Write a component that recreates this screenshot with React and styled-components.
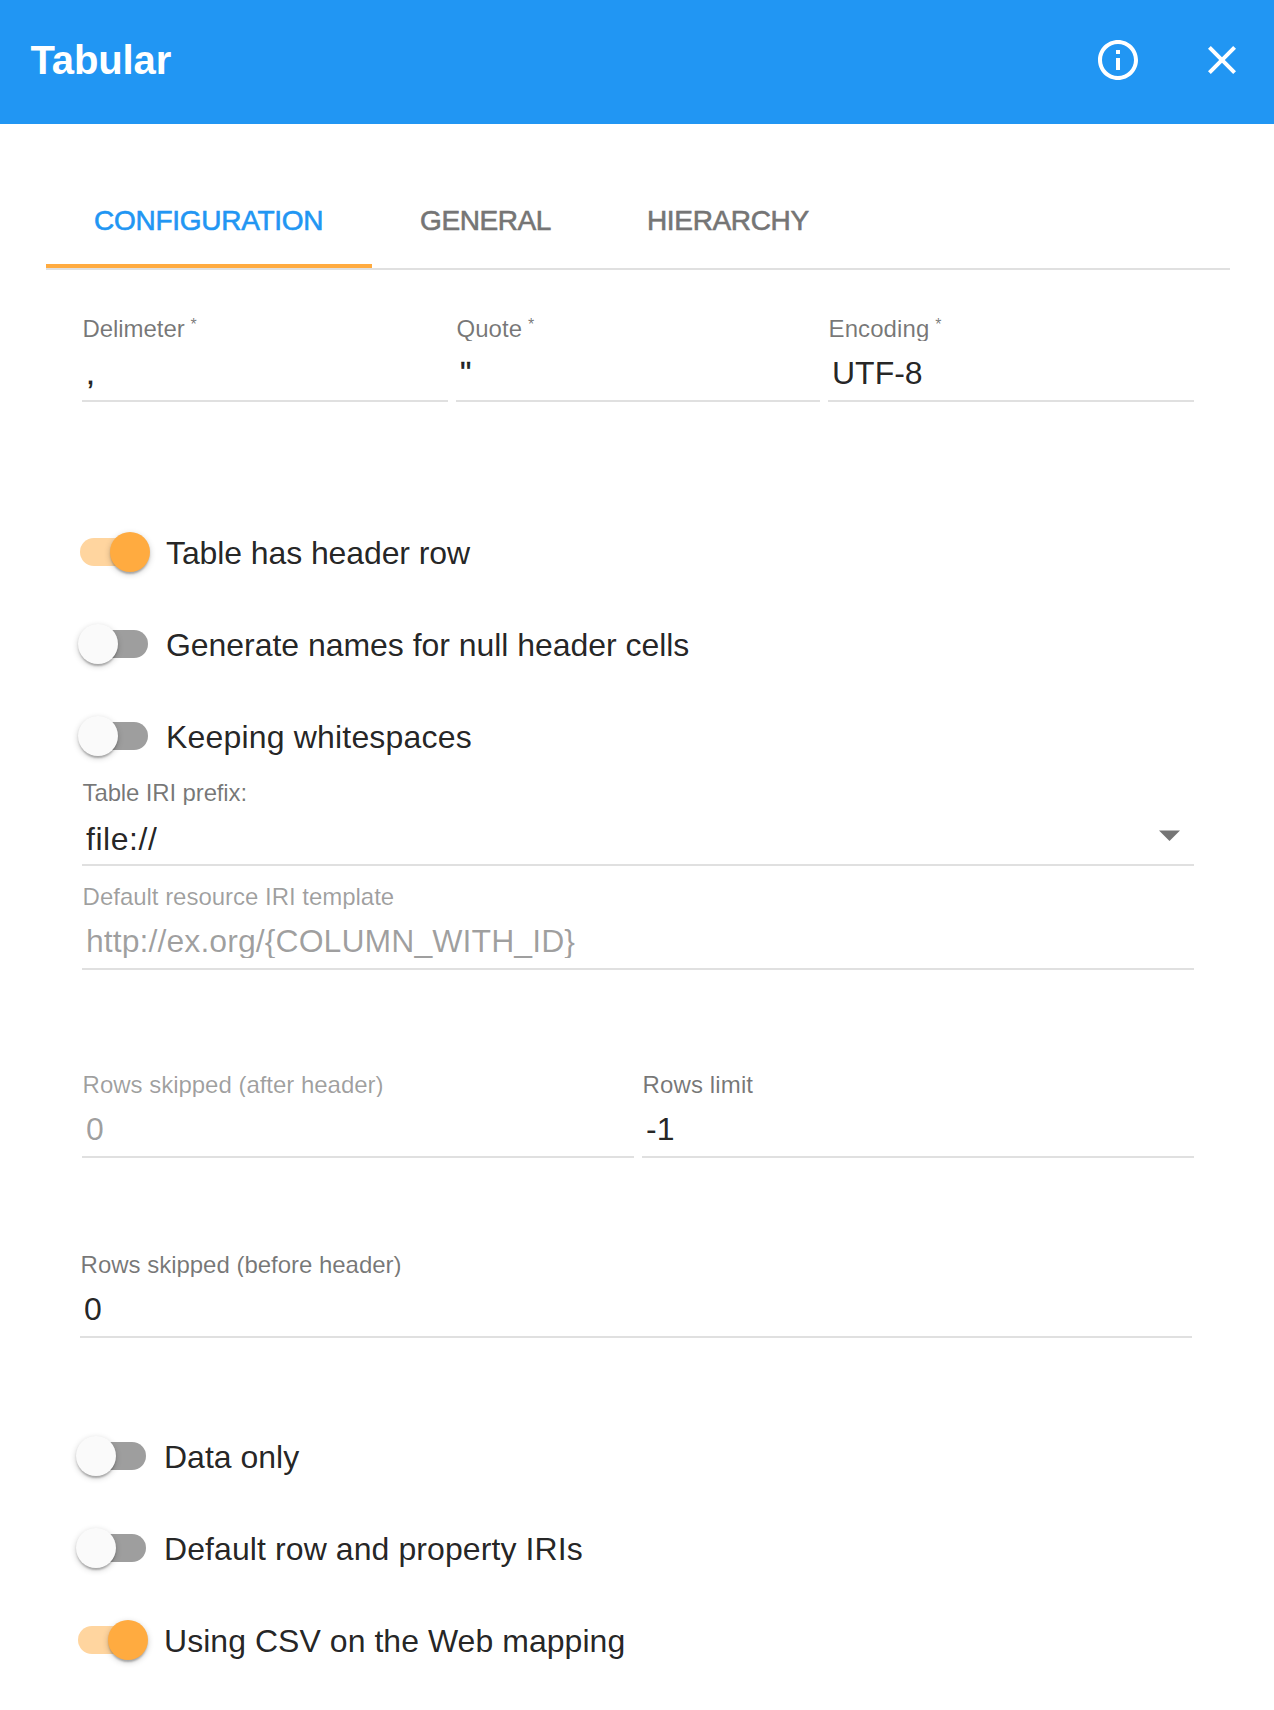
import React, { useState } from "react";
import styled, { createGlobalStyle } from "styled-components";

const GlobalStyle = createGlobalStyle`
  *, *::before, *::after { box-sizing: border-box; }
  body {
    margin: 0;
    background: #fff;
    color: rgba(0, 0, 0, 0.87);
    font-family: "Liberation Sans", Arial, Helvetica, sans-serif;
  }
`;

const Dialog = styled.main`
  display: flex;
  flex-direction: column;
  width: 1274px;
  height: 1710px;
  overflow: hidden;
  background: #fff;
`;

const Header = styled.header`
  display: flex;
  align-items: flex-start;
  height: 124px;
  padding: 36px 28px 0 30.4px;
  background: #2196f3;
  color: #fff;
`;

const Title = styled.h1`
  flex: 1;
  margin: 0;
  font-size: 40px;
  font-weight: 700;
  line-height: 49px;
  letter-spacing: -0.1px;
`;

const IconButton = styled.button`
  display: flex;
  width: 48px;
  height: 48px;
  margin-left: 56px;
  padding: 0;
  border: 0;
  background: none;
  color: inherit;

  svg {
    width: 48px;
    height: 48px;
    fill: currentColor;
  }
`;

const Tabs = styled.nav`
  display: flex;
  height: 98px;
  margin: 48px 44px 0 46px;
  border-bottom: 2px solid #e0e0e0;
`;

const Tab = styled.button`
  width: ${(p) => p.$width}px;
  height: 96px;
  padding: 5px 0 0 48px;
  border: 0;
  border-bottom: 4px solid ${(p) => (p.$active ? "#ffab40" : "transparent")};
  background: none;
  color: ${(p) => (p.$active ? "#2196f3" : "#757575")};
  font: 400 28px/31px "Liberation Sans", Arial, sans-serif;
  letter-spacing: ${(p) => p.$spacing}px;
  -webkit-text-stroke: 0.6px currentColor;
  text-align: left;
  text-transform: uppercase;
  white-space: nowrap;
`;

const Form = styled.section`
  display: flex;
  flex-direction: column;
  padding: 45px 80px 0 82px;
`;

const Row = styled.div`
  display: grid;
  grid-template-columns: ${(p) => p.$columns || "1fr"};
  column-gap: 8px;
  margin-top: ${(p) => p.$top || 0}px;
`;

const OffsetGroup = styled.div`
  display: flex;
  flex-direction: column;
  width: 1112px;
  margin-left: -2px;
`;

const FieldBox = styled.label`
  display: flex;
  flex-direction: column;
  height: 87px;
  border-bottom: 2px solid #e0e0e0;
  color: ${(p) => (p.$muted ? "rgba(0, 0, 0, 0.38)" : "rgba(0, 0, 0, 0.87)")};
`;

const FieldLabel = styled.span`
  display: flex;
  height: 26px;
  padding-left: 0.6px;
  overflow: hidden;
  color: ${(p) => (p.$muted ? "rgba(0, 0, 0, 0.38)" : "rgba(0, 0, 0, 0.54)")};
  font-size: 24px;
  line-height: 27px;
  letter-spacing: ${(p) => p.$spacing || 0}px;
  white-space: nowrap;
`;

const Required = styled.sup`
  margin-left: 6px;
  font-size: 16px;
  line-height: 19px;
`;

const FieldValue = styled.span`
  height: 35px;
  margin-top: ${(p) => p.$gap}px;
  padding-left: 4px;
  overflow: hidden;
  font-size: 32px;
  line-height: 36px;
  letter-spacing: ${(p) => p.$spacing || 0}px;
  -webkit-text-stroke: ${(p) => (p.$heavy ? "0.4px currentColor" : "0")};
  white-space: nowrap;
`;

const SelectLine = styled.span`
  display: flex;
  justify-content: space-between;
`;

const Caret = styled.span`
  width: 21px;
  height: 11px;
  margin: 25px 14px 0 0;
  background: #757575;
  clip-path: polygon(0 0.5px, 100% 0.5px, 50% 100%);
`;

const SwitchList = styled.div`
  display: flex;
  flex-direction: column;
  gap: 44px;
  margin-top: ${(p) => p.$top}px;
`;

const SwitchRow = styled.button`
  display: flex;
  align-items: flex-start;
  height: 48px;
  margin-left: -4px;
  padding: 0;
  border: 0;
  background: none;
  color: inherit;
  font: 400 32px/50px "Liberation Sans", Arial, sans-serif;
  text-align: left;
  white-space: nowrap;
`;

const Track = styled.span`
  display: flex;
  align-items: center;
  width: 68px;
  height: 28px;
  margin: 10px 18px 0 2px;
  border-radius: 14px;
  background: ${(p) => (p.$on ? "#ffd59f" : "#9e9e9e")};
`;

const Thumb = styled.span`
  flex: none;
  width: 40px;
  height: 40px;
  margin-left: ${(p) => (p.$on ? 30 : -2)}px;
  border-radius: 50%;
  background: ${(p) => (p.$on ? "#ffab40" : "#fafafa")};
  box-shadow:
    0 2px 6px rgba(0, 0, 0, 0.2),
    0 2px 2px rgba(0, 0, 0, 0.14),
    0 4px 2px -2px rgba(0, 0, 0, 0.12);
`;

const SwitchText = styled.span`
  letter-spacing: ${(p) => p.$spacing || 0}px;
`;

function Field({ label, value, required, muted, select, spacing, valueSpacing, heavy }) {
  const text = (
    <FieldValue $gap={select ? 16 : 14} $spacing={valueSpacing} $heavy={heavy}>
      {value}
    </FieldValue>
  );
  return (
    <FieldBox $muted={muted}>
      <FieldLabel $muted={muted} $spacing={spacing}>
        {label}
        {required && <Required>*</Required>}
      </FieldLabel>
      {select ? (
        <SelectLine>
          {text}
          <Caret />
        </SelectLine>
      ) : (
        text
      )}
    </FieldBox>
  );
}

function Switch({ label, defaultOn = false, spacing }) {
  const [on, setOn] = useState(defaultOn);
  return (
    <SwitchRow type="button" role="switch" aria-checked={on} onClick={() => setOn(!on)}>
      <Track $on={on}>
        <Thumb $on={on} />
      </Track>
      <SwitchText $spacing={spacing}>{label}</SwitchText>
    </SwitchRow>
  );
}

const tabs = [
  { label: "Configuration", width: 326, spacing: -0.27 },
  { label: "General", width: 227, spacing: -0.4 },
  { label: "Hierarchy", width: 260, spacing: -0.35 },
];

export default function App() {
  const [active, setActive] = useState("Configuration");
  return (
    <Dialog>
      <GlobalStyle />
      <Header>
        <Title>Tabular</Title>
        <IconButton type="button">
          <svg viewBox="0 0 24 24">
            <path d="M11 17h2v-6h-2v6zm1-15C6.48 2 2 6.48 2 12s4.48 10 10 10 10-4.48 10-10S17.52 2 12 2zm0 18c-4.41 0-8-3.59-8-8s3.59-8 8-8 8 3.59 8 8-3.59 8-8 8zM11 9h2V7h-2v2z" />
          </svg>
        </IconButton>
        <IconButton type="button">
          <svg viewBox="0 0 24 24">
            <path d="M19 6.41L17.59 5 12 10.59 6.41 5 5 6.41 10.59 12 5 17.59 6.41 19 12 13.41 17.59 19 19 17.59 13.41 12z" />
          </svg>
        </IconButton>
      </Header>
      <Tabs>
        {tabs.map((t) => (
          <Tab
            key={t.label}
            type="button"
            $width={t.width}
            $spacing={t.spacing}
            $active={active === t.label}
            onClick={() => setActive(t.label)}
          >
            {t.label}
          </Tab>
        ))}
      </Tabs>
      <Form>
        <Row $columns="366px 364px 366px">
          <Field label="Delimeter" value="," spacing={-0.08} required heavy />
          <Field label="Quote" value={'"'} required heavy />
          <Field label="Encoding" value="UTF-8" spacing={0.08} required />
        </Row>
        <SwitchList $top={126}>
          <Switch label="Table has header row" spacing={-0.1} defaultOn />
          <Switch label="Generate names for null header cells" spacing={-0.04} />
          <Switch label="Keeping whitespaces" spacing={0.18} />
        </SwitchList>
        <Row $top={19}>
          <Field label="Table IRI prefix:" value="file://" spacing={-0.14} valueSpacing={0.55} select />
        </Row>
        <Row $top={17}>
          <Field
            label="Default resource IRI template"
            value="http://ex.org/{COLUMN_WITH_ID}"
            spacing={-0.02}
            valueSpacing={0.06}
            muted
          />
        </Row>
        <Row $top={101} $columns="552px 552px">
          <Field label="Rows skipped (after header)" value="0" spacing={-0.02} muted />
          <Field label="Rows limit" value="-1" spacing={0.12} />
        </Row>
        <OffsetGroup>
          <Row $top={93}>
            <Field label="Rows skipped (before header)" value="0" spacing={-0.02} />
          </Row>
          <SwitchList $top={94}>
            <Switch label="Data only" />
            <Switch label="Default row and property IRIs" spacing={0.09} />
            <Switch label="Using CSV on the Web mapping" spacing={0.04} defaultOn />
          </SwitchList>
        </OffsetGroup>
      </Form>
    </Dialog>
  );
}
